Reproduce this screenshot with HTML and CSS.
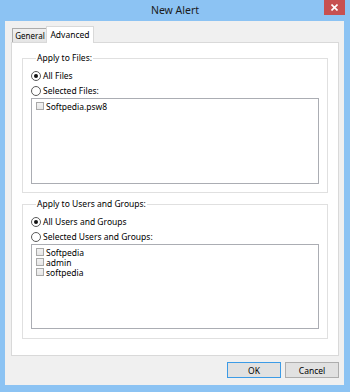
FILE: index.html
```html
<!DOCTYPE html>
<html lang="en">
  <head>
    <meta charset="UTF-8" />
    <title>New Alert</title>
    <link rel="stylesheet" href="styles.css">
  </head>
  <body>
    <div class="window">
      <div class="titlebar">
        <span></span>
        <div class="title">New Alert</div>
        <div class="close">
          <svg width="7" height="7" viewBox="0 0 7 7"><path d="M0.5 0.5 L6.5 6.5 M6.5 0.5 L0.5 6.5" stroke="#fff" stroke-width="1.6"/></svg>
        </div>
      </div>

      <div class="client">
        <div class="tabs">
          <div class="tab">General</div>
          <div class="tab active">Advanced</div>
        </div>

        <div class="panel">
          <fieldset class="group">
            <legend>Apply to Files:</legend>
            <div class="option"><span class="radio checked"></span>All Files</div>
            <div class="option"><span class="radio"></span>Selected Files:</div>
            <div class="listbox files">
              <div class="item"><span class="check"></span>Softpedia.psw8</div>
            </div>
          </fieldset>

          <fieldset class="group">
            <legend>Apply to Users and Groups:</legend>
            <div class="option"><span class="radio checked"></span>All Users and Groups</div>
            <div class="option"><span class="radio"></span>Selected Users and Groups:</div>
            <div class="listbox users">
              <div class="item"><span class="check"></span>Softpedia</div>
              <div class="item"><span class="check"></span>admin</div>
              <div class="item"><span class="check"></span>softpedia</div>
            </div>
          </fieldset>
        </div>

        <div class="buttons">
          <button class="btn default">OK</button>
          <button class="btn">Cancel</button>
        </div>
      </div>
    </div>
  </body>
</html>
```

FILE: styles.css
```css
body {
  margin: 0;
  font-family: "Noto Sans", "Open Sans", sans-serif;
  font-size: 8.5px;
  color: #000;
}

.window {
  width: 350px;
  height: 392px;
  box-sizing: border-box;
  background: #8cc3f3;
  display: flex;
  flex-direction: column;
}

/* title bar */
.titlebar {
  height: 21px;
  flex: none;
  display: grid;
  grid-template-columns: 1fr auto 1fr;
}

.title {
  font-size: 10.5px;
  line-height: 21px;
  color: #1b1b1b;
}

.close {
  justify-self: end;
  align-self: start;
  width: 21px;
  height: 15px;
  margin-right: 5px;
  background: #c75050;
  display: flex;
  align-items: center;
  justify-content: center;
}

.close svg {
  display: block;
}

/* client area */
.client {
  flex: 1;
  margin: 0 6px 7px 5px;
  padding: 5px 5px 7px 6px;
  background: #f0f0f0;
  display: flex;
  flex-direction: column;
}

.tabs {
  height: 16px;
  flex: none;
  display: flex;
  align-items: flex-end;
  padding-left: 1px;
}

.tab {
  box-sizing: border-box;
  height: 14px;
  width: 36px;
  border: 1px solid #acacac;
  border-bottom: none;
  background: linear-gradient(#f0f0f0, #e5e5e5);
  text-align: center;
  font-size: 8px;
  line-height: 13px;
  white-space: nowrap;
}

.tab.active {
  position: relative;
  z-index: 1;
  height: 17px;
  width: 48px;
  margin-left: -2px;
  margin-bottom: -1px;
  border-color: #d9d9d9;
  background: #fff;
  font-size: 8.5px;
  line-height: 15px;
}

.panel {
  height: 314px;
  box-sizing: border-box;
  border: 1px solid #d9d9d9;
  background: #fff;
  padding: 9px 10px 16px 10px;
  display: flex;
  flex-direction: column;
  gap: 5px;
}

/* group boxes */
.group {
  margin: 0;
  min-width: 0;
  border: 1px solid #e0e0e0;
  padding: 4px 8px 8px 8px;
}

.group + .group {
  padding-bottom: 9px;
}

.group legend {
  padding: 0 1px;
  margin-left: 5px;
  line-height: 12px;
}

.option {
  height: 15px;
  display: flex;
  align-items: center;
}

.radio {
  width: 10px;
  height: 10px;
  box-sizing: border-box;
  border: 1px solid #5a5a5a;
  border-radius: 50%;
  background: #fff;
  margin-right: 2px;
  display: flex;
  align-items: center;
  justify-content: center;
}

.radio.checked::after {
  content: "";
  width: 4px;
  height: 4px;
  border-radius: 50%;
  background: #111;
}

.listbox {
  box-sizing: border-box;
  border: 1px solid #abadb3;
  background: #fff;
  padding: 2px 3px;
}

.listbox.files {
  height: 86px;
}

.listbox.users {
  height: 85px;
}

.item {
  height: 10px;
  display: flex;
  align-items: center;
}

.check {
  width: 8px;
  height: 8px;
  box-sizing: border-box;
  border: 1px solid #a9a9a9;
  background: linear-gradient(#f2f2f2, #e6e6e6);
  margin: 0 2px 0 1px;
}

/* dialog buttons */
.buttons {
  margin-top: 6px;
  display: flex;
  justify-content: flex-end;
  gap: 4px;
}

.btn {
  width: 54px;
  height: 16px;
  padding: 0;
  border: 1px solid #adadad;
  background: #e1e1e1;
  font-family: inherit;
  font-size: 8.5px;
  color: #000;
}

.btn.default {
  border-color: #3c9be6;
}
```
